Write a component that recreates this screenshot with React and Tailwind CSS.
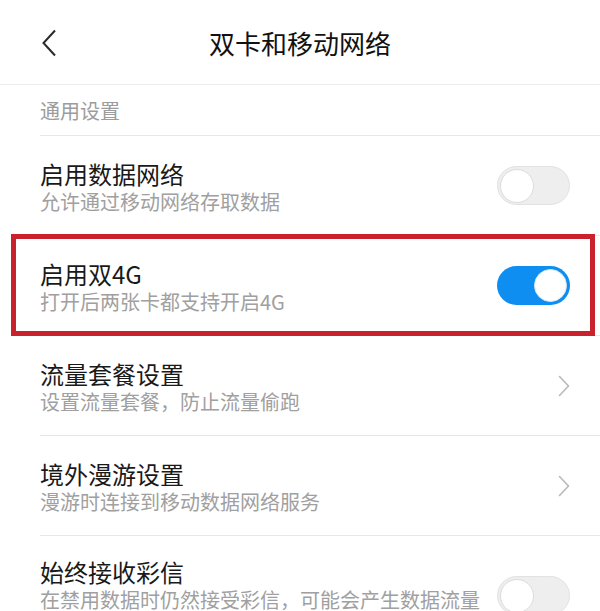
import React from "react";

function Toggle({ on }) {
  return on ? (
    <div className="flex h-[39px] w-[73px] shrink-0 items-center justify-end rounded-full bg-[#0e8ef0] pr-[3px]">
      <div className="h-[33px] w-[33px] rounded-full border border-[#d6e6f3] bg-white" />
    </div>
  ) : (
    <div className="flex h-[39px] w-[73px] shrink-0 items-center rounded-full border border-[#e2e2e2] bg-[#eeeeee] pl-[2px]">
      <div className="h-[34px] w-[34px] rounded-full border border-[#dcdcdc] bg-white" />
    </div>
  );
}

function Chevron() {
  return (
    <svg width="12" height="22" viewBox="0 0 12 22" className="shrink-0">
      <path d="M1.5 1.5 L10.5 11 L1.5 20.5" fill="none" stroke="#b9b9b9" strokeWidth="1.6" strokeLinejoin="round" strokeLinecap="round" />
    </svg>
  );
}

function Row({ title, sub, right, highlight, tall }) {
  return (
    <div className="relative">
      <div className={`ml-[40px] flex items-center border-b border-[#e7e7e7] pr-[30px] ${tall ? "h-[124px] pb-[4px]" : "h-[100px]"}`}>
        <div className="w-[448px]">
          <div className="text-[24px] leading-[33px] text-[#191919]">{title}</div>
          <div className="text-[20px] leading-[24px] text-[#a0a0a0]">{sub}</div>
        </div>
        <div className="ml-auto flex items-center">{right}</div>
      </div>
      {highlight && (
        <div className="pointer-events-none absolute left-[11px] right-[5px] top-[-2px] bottom-0 border-[5px] border-[#c9222c]" />
      )}
    </div>
  );
}

export default function App() {
  return (
    <div
      className="h-[611px] w-[600px] overflow-hidden bg-white"
      style={{ fontFamily: '"Noto Sans CJK SC", "Noto Sans", sans-serif' }}
    >
      <div className="flex h-[85px] items-center border-b border-[#ececec]">
        <div className="flex w-[100px] items-center pl-[41px] pt-[2px]">
          <svg width="17" height="28" viewBox="0 0 17 28">
            <path d="M14 1.5 L2.5 14 L14 26.5" fill="none" stroke="#2a2a2a" strokeWidth="2" strokeLinejoin="miter" />
          </svg>
        </div>
        <div className="flex-1 pt-[2px] text-center text-[26px] leading-[34px] text-[#111111]">双卡和移动网络</div>
        <div className="w-[100px]" />
      </div>
      <div className="ml-[40px] h-[51px] border-b border-[#e7e7e7] pt-[14px] text-[20px] leading-[24px] text-[#9c9c9c]">
        通用设置
      </div>
      <Row title="启用数据网络" sub="允许通过移动网络存取数据" right={<Toggle on={false} />} />
      <Row title="启用双4G" sub="打开后两张卡都支持开启4G" right={<Toggle on />} highlight />
      <Row title="流量套餐设置" sub="设置流量套餐，防止流量偷跑" right={<Chevron />} />
      <Row title="境外漫游设置" sub="漫游时连接到移动数据网络服务" right={<Chevron />} />
      <Row
        title="始终接收彩信"
        sub="在禁用数据时仍然接受彩信，可能会产生数据流量费用"
        right={<Toggle on={false} />}
        tall
      />
    </div>
  );
}
